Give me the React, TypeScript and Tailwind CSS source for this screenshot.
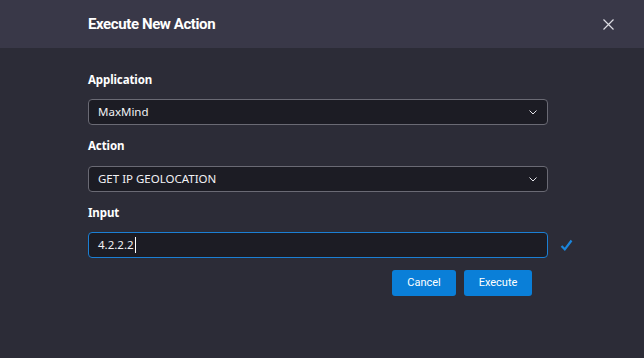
import React from "react";

const Chevron = () => (
  <svg width="8" height="5" viewBox="0 0 8 5" className="shrink-0">
    <path d="M0.5 0.5 L4 4 L7.5 0.5" fill="none" stroke="#e5e5ea" strokeWidth="1" />
  </svg>
);

const Select = ({ value }: { value: string }) => (
  <div className="flex h-[26px] w-[460px] shrink-0 items-center justify-between rounded-[4px] border border-[#6a6a74] bg-[#1c1c24] pl-[9px] pr-[10px]">
    <span className="text-[11.5px] text-[#f2f2f5]">{value}</span>
    <Chevron />
  </div>
);

const Label = ({ children }: { children: React.ReactNode }) => (
  <div className="h-[16px] text-[11.5px] font-bold leading-[16px] tracking-[-0.1px] text-white">{children}</div>
);

export default function App() {
  return (
    <div
      className="flex h-[358px] w-[644px] flex-col bg-[#2c2c37]"
      style={{ fontFamily: "'Segoe UI', 'Noto Sans', 'Open Sans', sans-serif" }}
    >
      <div className="flex h-[48px] shrink-0 items-center justify-between bg-[#393848] pl-[88px] pr-[30px]">
        <div
          className="text-[15px] font-bold tracking-[-0.4px] text-white"
          style={{ fontFamily: "Roboto, 'Liberation Sans', sans-serif" }}
        >
          Execute New Action
        </div>
        <svg width="11" height="11" viewBox="0 0 11 11">
          <path d="M0.5 0.5 L10.5 10.5 M10.5 0.5 L0.5 10.5" stroke="#dcdce2" strokeWidth="1.2" />
        </svg>
      </div>
      <div className="flex flex-col pl-[88px] pt-[24px]">
        <Label>Application</Label>
        <div className="mt-[11px] flex">
          <Select value="MaxMind" />
        </div>
        <div className="mt-[13px]">
          <Label>Action</Label>
        </div>
        <div className="mt-[12px] flex">
          <Select value="GET IP GEOLOCATION" />
        </div>
        <div className="mt-[13px]">
          <Label>Input</Label>
        </div>
        <div className="mt-[11px] flex items-center gap-[12px]">
          <div className="flex h-[26px] w-[460px] shrink-0 items-center rounded-[4px] border border-[#1b7fd4] bg-[#1c1c24] pl-[9px]">
            <span className="text-[11.5px] text-[#f2f2f5]">4.2.2.2</span>
            <span className="ml-[1px] h-[16px] w-px bg-white" />
          </div>
          <svg width="13" height="12" viewBox="0 0 13 12" className="shrink-0">
            <path d="M1.5 7 L4.8 10.3 L11.5 1.5" fill="none" stroke="#1b86dc" strokeWidth="2.2" />
          </svg>
        </div>
        <div className="mt-[12px] flex w-[444px] justify-end gap-[8px]">
          <button
            className="h-[26px] w-[64px] rounded-[3px] bg-[#0a7fd8] text-[11px] text-white"
            style={{ fontFamily: "Roboto, 'Liberation Sans', sans-serif" }}
          >
            Cancel
          </button>
          <button
            className="h-[26px] w-[68px] rounded-[3px] bg-[#0a7fd8] text-[11px] text-white"
            style={{ fontFamily: "Roboto, 'Liberation Sans', sans-serif" }}
          >
            Execute
          </button>
        </div>
      </div>
    </div>
  );
}
